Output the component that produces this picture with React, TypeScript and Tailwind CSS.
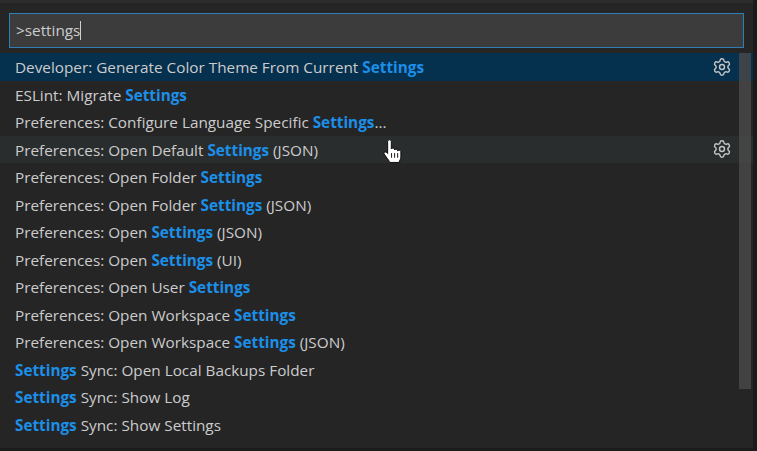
import { Settings as Gear } from "lucide-react";

type Part = string | { hl: string };

const rows: { parts: Part[]; gear?: boolean; tone?: string }[] = [
  { parts: ["Developer: Generate Color Theme From Current ", { hl: "Settings" }], gear: true, tone: "bg-[#05304e]" },
  { parts: ["ESLint: Migrate ", { hl: "Settings" }] },
  { parts: ["Preferences: Configure Language Specific ", { hl: "Settings" }, "..."] },
  { parts: ["Preferences: Open Default ", { hl: "Settings" }, " (JSON)"], gear: true, tone: "bg-[#2a2d2e]" },
  { parts: ["Preferences: Open Folder ", { hl: "Settings" }] },
  { parts: ["Preferences: Open Folder ", { hl: "Settings" }, " (JSON)"] },
  { parts: ["Preferences: Open ", { hl: "Settings" }, " (JSON)"] },
  { parts: ["Preferences: Open ", { hl: "Settings" }, " (UI)"] },
  { parts: ["Preferences: Open User ", { hl: "Settings" }] },
  { parts: ["Preferences: Open Workspace ", { hl: "Settings" }] },
  { parts: ["Preferences: Open Workspace ", { hl: "Settings" }, " (JSON)"] },
  { parts: [{ hl: "Settings" }, " Sync: Open Local Backups Folder"] },
  { parts: [{ hl: "Settings" }, " Sync: Show Log"] },
  { parts: [{ hl: "Settings" }, " Sync: Show Settings"] },
];

function HandCursor() {
  return (
    <svg width="22" height="25" viewBox="0 0 18 24" preserveAspectRatio="none" className="absolute left-[383px] top-[139px]">
      <path
        d="M3.800 2.200c0-1.900 3-1.900 3 0V9.500c0-1 2.600-1 2.600 0v1c0-1 2.600-1 2.600 0v1c0-1 2.600-.9 2.600.3V17c0 2.500-1 3.500-1.500 5.500H5.500C4.800 20 2.200 17 1 14.500c-.8-1.600 1.200-2.800 2.200-1.400l.6.900z"
        fill="#fff"
        stroke="#000"
        strokeWidth="0.8"
      />
      <path d="M7 13.500v4.500M9.500 13.500v4.500M12 13.500v4.500" stroke="#000" strokeWidth="0.8" />
    </svg>
  );
}

export default function App() {
  return (
    <div className="relative w-[757px] h-[451px] overflow-hidden bg-[#1b1b1c] font-['Open_Sans','Noto_Sans',sans-serif]">
      <div className="w-[753px] h-[448px] bg-[#252526] border-t-[3px] border-[#2c2c2d]">
        <div className="px-[9px] pt-[10px]">
          <div className="h-[35px] w-[735px] bg-[#3c3c3c] border border-[#2f7fb5] flex items-center pl-[6px] text-[15.3px] text-[#cccccc]">
            <span>&gt;settings</span>
            <span className="w-px h-[19px] bg-[#d0d0d0]"></span>
          </div>
        </div>
        <div className="mt-[5px]">
          {rows.map((row, i) => (
            <div
              key={i}
              className={`h-[27.5px] flex items-center justify-between pl-[15px] pr-[22px] text-[15.3px] text-[#cccccc] ${row.tone ?? ""}`}
            >
              <span className="whitespace-pre pt-[2px]">
                {row.parts.map((p, j) =>
                  typeof p === "string" ? (
                    <span key={j}>{p}</span>
                  ) : (
                    <span key={j} className="font-bold text-[#1c8fe8]">
                      {p.hl}
                    </span>
                  )
                )}
              </span>
              {row.gear && <Gear size={20} strokeWidth={1.7} className="text-[#c5c5c5] mr-[-1px]" />}
            </div>
          ))}
        </div>
      </div>
      <div className="absolute left-[739px] top-[53px] w-[12px] h-[336px] bg-[#4a4a4a]/80"></div>
      <HandCursor />
    </div>
  );
}
